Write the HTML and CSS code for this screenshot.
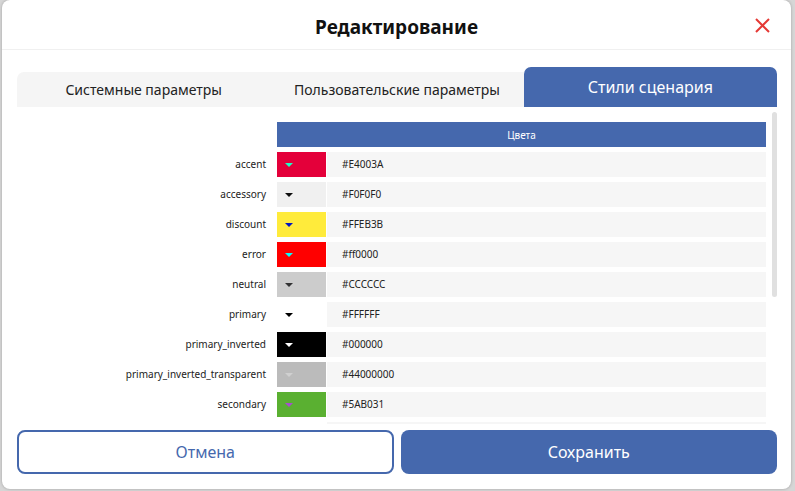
FILE: index.html
```html
<!DOCTYPE html>
<html lang="ru">
<head>
    <meta charset="UTF-8">
    <title>Редактирование</title>
    <link rel="stylesheet" href="styles.css">
</head>
<body>
    <div class="dialog">
        <div class="dialog-header">
            <span></span>
            <h1 class="dialog-title">Редактирование</h1>
            <button class="close-btn" type="button" aria-label="Закрыть">
                <svg width="15" height="15" viewBox="0 0 15 15">
                    <path d="M1 1 L14 14 M14 1 L1 14" stroke="#e53935" stroke-width="2" fill="none"/>
                </svg>
            </button>
        </div>

        <div class="dialog-body">
            <div class="tabs">
                <div class="tab tab-first">Системные параметры</div>
                <div class="tab">Пользовательские параметры</div>
                <div class="tab active">Стили сценария</div>
            </div>

            <div class="tab-content">
                <div class="colors">
                    <div></div>
                    <div class="colors-head">Цвета</div>

                    <div class="color-name">accent</div>
                    <div class="swatch" style="background:#E4003A;color:#1BFFC5"></div>
                    <div class="color-value">#E4003A</div>

                    <div class="color-name">accessory</div>
                    <div class="swatch" style="background:#F0F0F0;color:#0F0F0F"></div>
                    <div class="color-value">#F0F0F0</div>

                    <div class="color-name">discount</div>
                    <div class="swatch" style="background:#FFEB3B;color:#0014C4"></div>
                    <div class="color-value">#FFEB3B</div>

                    <div class="color-name">error</div>
                    <div class="swatch" style="background:#ff0000;color:#00ffff"></div>
                    <div class="color-value">#ff0000</div>

                    <div class="color-name">neutral</div>
                    <div class="swatch" style="background:#CCCCCC;color:#333333"></div>
                    <div class="color-value">#CCCCCC</div>

                    <div class="color-name">primary</div>
                    <div class="swatch" style="background:#FFFFFF;color:#000000"></div>
                    <div class="color-value">#FFFFFF</div>

                    <div class="color-name">primary_inverted</div>
                    <div class="swatch" style="background:#000000;color:#FFFFFF"></div>
                    <div class="color-value">#000000</div>

                    <div class="color-name">primary_inverted_transparent</div>
                    <div class="swatch" style="background:#BBBBBB;color:#D0D0D0"></div>
                    <div class="color-value">#44000000</div>

                    <div class="color-name">secondary</div>
                    <div class="swatch" style="background:#5AB031;color:#A54FCE"></div>
                    <div class="color-value">#5AB031</div>

                    <!-- next row, only its top edge shows above the fold -->
                    <div class="color-name"></div>
                    <div class="swatch-empty"></div>
                    <div class="color-value"></div>
                </div>
                <div class="scrollbar"></div>
            </div>

            <div class="actions">
                <button class="btn btn-outline" type="button">Отмена</button>
                <button class="btn btn-primary" type="button">Сохранить</button>
            </div>
        </div>
    </div>
</body>
</html>
```

FILE: styles.css
```css
html, body {
    margin: 0;
    height: 100%;
}
body {
    font-family: "Noto Sans", "Open Sans", sans-serif;
    background-color: #d6d6d6;
    padding: 0 4px 2px 2px;
    box-sizing: border-box;
    color: #222;
}
.dialog {
    height: 489px;
    background: white;
    border-radius: 8px;
    box-shadow: 0 0 3px rgba(0,0,0,0.25);
    display: flex;
    flex-direction: column;
    overflow: hidden;
}
.dialog-header {
    height: 50px;
    border-bottom: 1px solid #f0f0f0;
    display: grid;
    grid-template-columns: 1fr auto 1fr;
    align-items: center;
    box-sizing: border-box;
}
.dialog-title {
    margin: 0;
    font-size: 19px;
    font-weight: bold;
    color: #111;
    padding-top: 4px;
}
.close-btn {
    justify-self: end;
    margin-right: 21px;
    margin-top: 2px;
    background: none;
    border: none;
    padding: 0;
    width: 15px;
    height: 15px;
    cursor: pointer;
}
.close-btn svg {
    display: block;
}
.dialog-body {
    flex: 1;
    display: flex;
    flex-direction: column;
    padding: 17px 14px 15px 15px;
    min-height: 0;
}
.tabs {
    display: grid;
    grid-template-columns: 1fr 1fr 1fr;
    align-items: end;
    height: 40px;
}
.tab {
    height: 35px;
    background: #f5f5f5;
    display: flex;
    align-items: center;
    justify-content: center;
    font-size: 14px;
    color: #222;
}
.tab-first {
    border-top-left-radius: 7px;
}
.tab.active {
    height: 40px;
    background: #4568ad;
    color: white;
    font-size: 16px;
    border-radius: 7px 7px 0 0;
}
.tab-content {
    position: relative;
    height: 317px;
    overflow: hidden;
    padding: 15px 11px 0 0;
    box-sizing: border-box;
}
.colors {
    display: grid;
    grid-template-columns: 249px 49px 1fr;
    column-gap: 11px;
    row-gap: 5px;
    grid-auto-rows: 25px;
}
.colors-head {
    grid-column: 2 / 4;
    background: #4568ad;
    color: white;
    font-size: 10px;
    display: flex;
    align-items: center;
    justify-content: center;
}
.color-name {
    text-align: right;
    font-size: 10px;
    line-height: 25px;
}
.swatch {
    position: relative;
}
.swatch::after {
    content: "";
    position: absolute;
    left: 8px;
    top: 11px;
    border-left: 4px solid transparent;
    border-right: 4px solid transparent;
    border-top: 4px solid currentColor;
}
.color-value {
    margin-left: -10px;
    background: #f6f6f6;
    padding-left: 15px;
    font-size: 10px;
    line-height: 25px;
}
.scrollbar {
    position: absolute;
    right: 0;
    top: 5px;
    width: 5px;
    height: 185px;
    background: #e0e0e0;
    border-radius: 3px;
}
.actions {
    display: grid;
    grid-template-columns: 1fr 1fr;
    gap: 7px;
    margin-top: 6px;
}
.btn {
    height: 44px;
    border-radius: 8px;
    font-family: inherit;
    font-size: 16px;
    cursor: pointer;
}
.btn-outline {
    background: white;
    border: 2px solid #4568ad;
    color: #4568ad;
}
.btn-primary {
    background: #4568ad;
    border: none;
    color: white;
}
```
